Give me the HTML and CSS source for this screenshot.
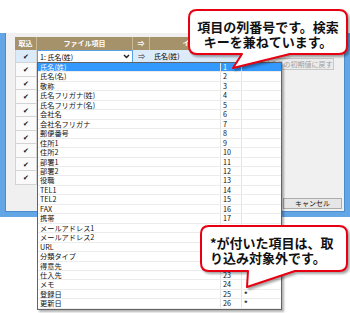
FILE: index.html
```html
<!DOCTYPE html>
<html lang="ja">
<head>
    <meta charset="UTF-8">
    <title>インポート項目の設定</title>
    <link rel="stylesheet" href="styles.css">
</head>
<body>
    <div class="page">
        <div class="window">
            <div class="content">
                <div class="grid">
                    <div class="grid-head">
                        <div class="col-check">取込</div>
                        <div class="col-file">ファイル項目</div>
                        <div class="col-arrow">⇒</div>
                        <div class="col-import">インポート項目</div>
                    </div>
                    <div class="grid-row current">
                        <div class="col-check"><span class="tick">✔</span></div>
                        <div class="col-file">
                            <div class="combo">
                                <span class="combo-text">1: 氏名(姓)</span>
                                <span class="combo-btn">
                                    <svg width="7" height="5" viewBox="0 0 7 5"><path d="M1 1 L3.5 3.5 L6 1" fill="none" stroke="#222" stroke-width="1.5"/></svg>
                                </span>
                            </div>
                        </div>
                        <div class="col-arrow">⇒</div>
                        <div class="col-import">氏名(姓)</div>
                    </div>
                    <div class="grid-row"><div class="col-check"><span class="tick">✔</span></div></div>
                    <div class="grid-row"><div class="col-check"><span class="tick">✔</span></div></div>
                    <div class="grid-row"><div class="col-check"><span class="tick">✔</span></div></div>
                    <div class="grid-row"><div class="col-check"><span class="tick">✔</span></div></div>
                    <div class="grid-row"><div class="col-check"><span class="tick">✔</span></div></div>
                    <div class="grid-row"><div class="col-check"><span class="tick">✔</span></div></div>
                    <div class="grid-row"><div class="col-check"><span class="tick">✔</span></div></div>
                    <div class="grid-row"><div class="col-check"><span class="tick">✔</span></div></div>
                    <div class="grid-row"><div class="col-check"><span class="tick">✔</span></div></div>
                </div>
                <div class="side">
                    <button class="btn btn-reset" disabled>項目の初期値に戻す</button>
                    <button class="btn btn-cancel">キャンセル</button>
                </div>
            </div>
        </div>

        <ul class="dropdown">
            <li class="selected"><span class="item-name">氏名(姓)</span><span class="item-no">1</span><span class="item-mark"></span></li>
            <li><span class="item-name">氏名(名)</span><span class="item-no">2</span><span class="item-mark"></span></li>
            <li><span class="item-name">敬称</span><span class="item-no">3</span><span class="item-mark"></span></li>
            <li><span class="item-name">氏名フリガナ(姓)</span><span class="item-no">4</span><span class="item-mark"></span></li>
            <li><span class="item-name">氏名フリガナ(名)</span><span class="item-no">5</span><span class="item-mark"></span></li>
            <li><span class="item-name">会社名</span><span class="item-no">6</span><span class="item-mark"></span></li>
            <li><span class="item-name">会社名フリガナ</span><span class="item-no">7</span><span class="item-mark"></span></li>
            <li><span class="item-name">郵便番号</span><span class="item-no">8</span><span class="item-mark"></span></li>
            <li><span class="item-name">住所1</span><span class="item-no">9</span><span class="item-mark"></span></li>
            <li><span class="item-name">住所2</span><span class="item-no">10</span><span class="item-mark"></span></li>
            <li><span class="item-name">部署1</span><span class="item-no">11</span><span class="item-mark"></span></li>
            <li><span class="item-name">部署2</span><span class="item-no">12</span><span class="item-mark"></span></li>
            <li><span class="item-name">役職</span><span class="item-no">13</span><span class="item-mark"></span></li>
            <li><span class="item-name">TEL1</span><span class="item-no">14</span><span class="item-mark"></span></li>
            <li><span class="item-name">TEL2</span><span class="item-no">15</span><span class="item-mark"></span></li>
            <li><span class="item-name">FAX</span><span class="item-no">16</span><span class="item-mark"></span></li>
            <li><span class="item-name">携帯</span><span class="item-no">17</span><span class="item-mark"></span></li>
            <li><span class="item-name">メールアドレス1</span><span class="item-no">18</span><span class="item-mark"></span></li>
            <li><span class="item-name">メールアドレス2</span><span class="item-no">19</span><span class="item-mark"></span></li>
            <li><span class="item-name">URL</span><span class="item-no">20</span><span class="item-mark"></span></li>
            <li><span class="item-name">分類タイプ</span><span class="item-no">21</span><span class="item-mark"></span></li>
            <li><span class="item-name">得意先</span><span class="item-no">22</span><span class="item-mark"></span></li>
            <li><span class="item-name">仕入先</span><span class="item-no">23</span><span class="item-mark"></span></li>
            <li><span class="item-name">メモ</span><span class="item-no">24</span><span class="item-mark"></span></li>
            <li><span class="item-name">登録日</span><span class="item-no">25</span><span class="item-mark">*</span></li>
            <li><span class="item-name">更新日</span><span class="item-no">26</span><span class="item-mark">*</span></li>
        </ul>

        <!-- callouts over the dialog -->
        <div class="callout callout-key">
            <svg class="bubble" width="160" height="62" viewBox="0 0 160 62">
                <path d="M9 1 H151 Q159 1 159 9 V37 Q159 45 151 45 H102 L45 59 L54 45 H9 Q1 45 1 37 V9 Q1 1 9 1 Z"/>
            </svg>
            <div class="callout-text centered">
                <div>項目の列番号です。検索</div>
                <div>キーを兼ねています。</div>
            </div>
        </div>
        <div class="callout callout-skip">
            <svg class="bubble" width="148" height="66" viewBox="0 0 148 66">
                <path d="M9 1 H139 Q147 1 147 9 V38 Q147 46 139 46 H95 L47 62 L48 46 H9 Q1 46 1 38 V9 Q1 1 9 1 Z"/>
            </svg>
            <div class="callout-text">
                <div>*が付いた項目は、取</div>
                <div>り込み対象外です。</div>
            </div>
        </div>
    </div>
</body>
</html>
```

FILE: styles.css
```css
body {
    margin: 0;
    background-color: white;
    font-family: "Noto Sans CJK JP", sans-serif;
}
.page {
    position: relative;
    width: 350px;
    height: 313px;
    overflow: hidden;
}
.window {
    margin-top: 33px;
    height: 179px;
    background-color: #f0f0f0;
    border-left: 5px solid #62a6e6;
    border-right: 5px solid #62a6e6;
    border-bottom: 5px solid #62a6e6;
    box-shadow: inset 1px 0 #4a8ccf, inset -1px 0 #4a8ccf, inset 0 -1px #4a8ccf;
}
.content {
    display: flex;
    height: 100%;
    padding: 4px 0 0 10px;
    box-sizing: border-box;
}
.grid {
    width: 250px;
    font-size: 7px;
}
.grid-head {
    display: flex;
    height: 13px;
    background-color: #a6926a;
    color: white;
    font-weight: bold;
    line-height: 13px;
}
.grid-head > div {
    text-align: center;
    border-right: 1px solid #c9b995;
    box-sizing: border-box;
}
.col-check {
    width: 22px;
    flex-shrink: 0;
    text-align: center;
}
.col-file {
    width: 96px;
    flex-shrink: 0;
}
.col-arrow {
    width: 17px;
    flex-shrink: 0;
    text-align: center;
}
.col-import {
    flex: 1;
}
.grid-row {
    display: flex;
    height: 13.5px;
}
.grid-row .col-check {
    background-color: #fafafa;
    border: 1px solid #d4d4d4;
    border-top: none;
    box-sizing: border-box;
    line-height: 13px;
}
.grid-row.current {
    height: 13px;
}
.grid-row.current .col-check,
.grid-row.current .col-arrow,
.grid-row.current .col-import {
    background-color: #dcebfa;
}
.grid-row.current .col-import {
    padding-left: 4px;
    line-height: 13px;
}
.grid-row.current .col-arrow {
    line-height: 13px;
    color: #333;
}
.tick {
    font-family: "DejaVu Sans", sans-serif;
    font-size: 7px;
    color: #111;
}
.combo {
    display: flex;
    align-items: center;
    height: 13px;
    background-color: white;
    border: 1px solid #5aa2e8;
    box-sizing: border-box;
}
.combo-text {
    flex: 1;
    padding-left: 2px;
}
.combo-btn {
    width: 11px;
    display: flex;
    justify-content: center;
}
.side {
    flex: 1;
    display: flex;
    flex-direction: column;
    align-items: flex-start;
}
.btn {
    font-family: "Noto Sans CJK JP", sans-serif;
    font-size: 7px;
    padding: 0;
    background-color: #e6e6e6;
    border: 1px solid #acacac;
    color: #111;
    line-height: 9px;
}
.btn-reset {
    margin: 21px 0 0 3px;
    width: 66px;
    height: 12px;
    color: #a0a0a0;
    border-color: #c8c8c8;
    background-color: #ececec;
}
.btn-cancel {
    margin: auto 0 3px 18px;
    width: 59px;
    height: 11px;
}
.dropdown {
    position: absolute;
    left: 37px;
    top: 62px;
    width: 243px;
    margin: 0;
    padding: 0;
    list-style: none;
    background-color: white;
    border: 1px solid #646464;
    box-shadow: 2px 2px 2px rgba(0, 0, 0, 0.3);
    font-size: 7.2px;
    color: #111;
}
.dropdown li {
    display: flex;
    height: 9.46px;
    line-height: 9px;
    box-sizing: border-box;
    border-bottom: 1px solid #ececec;
}
.dropdown li.selected {
    background-color: #3399ff;
    color: white;
}
.item-name {
    width: 182px;
    padding-left: 2px;
    box-sizing: border-box;
}
.item-no {
    width: 22px;
    padding-left: 2px;
    box-sizing: border-box;
    border-left: 1px solid #e4e4e4;
    border-right: 1px solid #e4e4e4;
}
.item-mark {
    flex: 1;
    padding-left: 2px;
    font-weight: bold;
}
.callout {
    position: absolute;
}
.callout-key {
    left: 188px;
    top: 9px;
    width: 160px;
    height: 46px;
}
.callout-skip {
    left: 200px;
    top: 225px;
    width: 148px;
    height: 47px;
}
.bubble {
    position: absolute;
    left: 0;
    top: 0;
    overflow: visible;
    filter: drop-shadow(2px 2px 1px rgba(0, 0, 0, 0.35));
}
.bubble path {
    fill: white;
    stroke: #e60012;
    stroke-width: 2;
    stroke-linejoin: round;
}
.callout-text {
    position: relative;
    padding: 10px 0 0 10px;
    font-size: 13px;
    font-weight: bold;
    line-height: 15px;
    color: #111;
}
.callout-text.centered {
    padding-left: 0;
    text-align: center;
}
```
